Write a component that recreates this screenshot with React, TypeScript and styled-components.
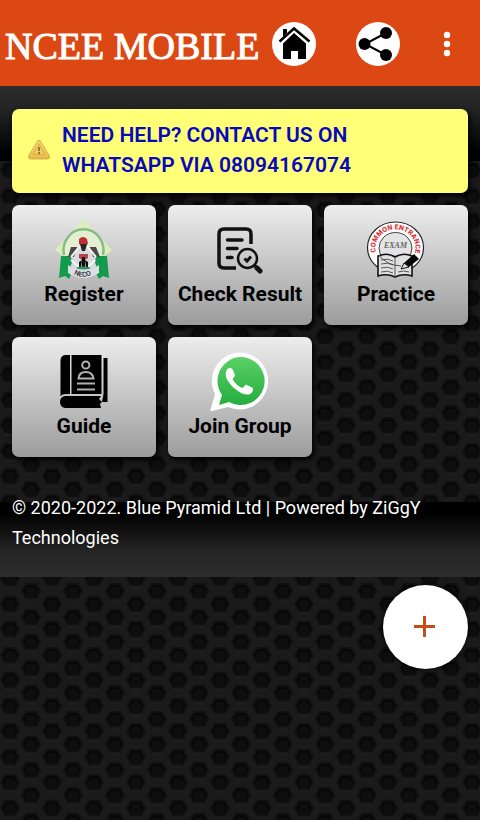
import React from "react";
import styled, { createGlobalStyle } from "styled-components";

const hexCell = (x: number, y: number) =>
  `<g transform='translate(${x} ${y})'><path d='M-9 0L-5-7H5L9 0L5 7H-5Z' fill='%23070707' stroke='%23101010' stroke-width='2' stroke-linejoin='round'/><path d='M-6 1L-3-4H3L6 1L3 6H-3Z' fill='%230e0e0e'/><path d='M-5 10H5' stroke='%231f1f1f'/></g>`;

const hexTile =
  `<svg xmlns='http://www.w3.org/2000/svg' width='42' height='51'><rect width='42' height='51' fill='%231a1a1a'/>` +
  [
    [10, 17], [10, 43], [10, -8], [52, 17], [52, 43], [52, -8],
    [31, 5], [31, 30], [31, 56],
  ].map(([x, y]) => hexCell(x, y)).join("") +
  `</svg>`;

const GlobalStyle = createGlobalStyle`
  * { box-sizing: border-box; }
  body {
    margin: 0;
    min-height: 100vh;
    background: #1a1a1a url("data:image/svg+xml,${hexTile}");
    font-family: Roboto, sans-serif;
  }
`;

const Header = styled.header`
  display: flex;
  align-items: center;
  min-height: 86px;
  padding: 0 12px 0 5px;
  background: #dc4814;
`;

const Title = styled.h1`
  flex: 1;
  margin: 0;
  padding-top: 5px;
  color: #fff;
  font: 400 38px/44px "Liberation Serif", serif;
  -webkit-text-stroke: 1px #fff;
  white-space: nowrap;
`;

const Actions = styled.nav`
  display: flex;
  align-items: center;
  gap: 40px;
  padding-top: 2px;
`;

const RoundButton = styled.button`
  width: 44px;
  height: 44px;
  padding: 0;
  border: 0;
  border-radius: 50%;
  background: #fff;
  svg { display: block; }
`;

const MenuButton = styled.button`
  width: 42px;
  height: 44px;
  padding: 0;
  margin-left: -14px;
  border: 0;
  background: none;
  svg { display: block; margin: auto; }
`;

const Page = styled.main`
  padding: 23px 12px 24px;
  background:
    linear-gradient(#2d2d2d, #242424 30%, #000 90%) top / 100% 75px no-repeat,
    linear-gradient(#000 15%, #242424 65%, #2d2d2d) bottom / 100% 75px no-repeat;
`;

const Notice = styled.a`
  display: flex;
  align-items: center;
  gap: 11px;
  padding: 11px 16px 13px 15px;
  border-radius: 7px;
  background: #ffff78;
  color: #0808bc;
  box-shadow: 2px 3px 6px #000;
  font-size: 21px;
  font-weight: 600;
  line-height: 30px;
  text-decoration: none;
  svg { flex: none; }
  span { max-width: 320px; }
`;

const Grid = styled.div`
  display: grid;
  grid-template-columns: repeat(3, 1fr);
  gap: 12px;
  margin-top: 12px;
`;

const Tile = styled.a`
  display: flex;
  flex-direction: column;
  align-items: center;
  padding: 14px 0 16px;
  border-radius: 7px;
  background: linear-gradient(#ededed, #9c9c9c);
  box-shadow: 2px 3px 6px #000;
  color: #000;
  font-size: 21px;
  font-weight: 700;
  line-height: 30px;
  text-decoration: none;
  white-space: nowrap;
`;

const Footer = styled.footer`
  margin-top: 36px;
  color: #fff;
  font-size: 18px;
  line-height: 30px;
`;

const FabRow = styled.div`
  display: flex;
  justify-content: flex-end;
  padding: 8px 12px;
`;

const Fab = styled.button`
  display: grid;
  place-items: center;
  width: 85px;
  height: 84px;
  padding: 0 2px 2px 0;
  border: 0;
  border-radius: 50%;
  background: #fff;
  box-shadow: 0 0 5px #000;
`;

const HomeIcon = () => (
  <svg width="44" height="44" viewBox="0 0 44 44" aria-hidden="true">
    <path d="M11 7h4v4l-4 4z" />
    <path d="M7.500 19.500L22 6.500L37.500 19.500" fill="none" stroke="#000" strokeWidth="2.500" />
    <path d="M22 11L34 21.500V37H26V29H19V37H11V21.500Z" />
  </svg>
);

const ShareIcon = () => (
  <svg width="44" height="44" viewBox="0 0 44 44" aria-hidden="true">
    <path d="M30 11L9 22L30 33" fill="none" stroke="#000" strokeWidth="2" />
    <circle cx="30" cy="11" r="6" />
    <circle cx="8.500" cy="22" r="6" />
    <circle cx="30" cy="33" r="6" />
  </svg>
);

const DotsIcon = () => (
  <svg width="8" height="26" viewBox="0 0 8 26" fill="#fff" aria-hidden="true">
    <circle cx="4" cy="4" r="3.200" />
    <circle cx="4" cy="13" r="3.200" />
    <circle cx="4" cy="22" r="3.200" />
  </svg>
);

const WarningIcon = () => (
  <svg width="24" height="24" viewBox="0 0 24 24" aria-hidden="true">
    <defs>
      <linearGradient id="amber" x2="0" y2="1">
        <stop stopColor="#f3d767" />
        <stop offset="1" stopColor="#eebf48" />
      </linearGradient>
    </defs>
    <path d="M9.500 4Q12 -.5 14.500 4L22.500 17Q24 21 20.500 21.500H3.500Q0 21 1.500 17Z" fill="#d9b34e" />
    <path d="M10.500 4Q12 2 13.500 4L21.500 17Q22 19.500 19.500 19.500H4.500Q2 19.500 2.500 17Z" fill="url(#amber)" />
    <path d="M12 6L18 16.500H6Z" fill="#efcf62" stroke="#d9ad48" />
    <path d="M12 9V13M12 14V16" stroke="#977732" strokeWidth="2" />
  </svg>
);

const NecoIcon = () => (
  <svg width="60" height="60" viewBox="0 0 60 60" aria-hidden="true">
    <path d="M29.500 .5L58 31L48 39H11L1 31Z" fill="#dcefb9" />
    <path d="M10 36A20 21 0 1 1 49 36" fill="#e4efd2" stroke="#86bd87" strokeWidth="2.500" />
    <path d="M7 37H17L19 51L15 60L11 57L5 59Z" fill="#129b4c" />
    <path d="M53 37H42L40 51L45 60L49 57L55 59Z" fill="#129b4c" />
    <path d="M17 28H25L23 38H14Z" fill="#4b4848" />
    <path d="M35 28H42L46 38H37Z" fill="#4b4848" />
    <path d="M23 29L29 22L36 29L43 49L29 55L16 49Z" fill="#d9dadd" />
    <path d="M17 38L26 27M42 38L33 27M17 41L26 49M41 41L33 49" stroke="#f5f5f5" strokeWidth="2" />
    <path d="M25 20Q29 16 33 20L34 25Q29 27 25 25Z" fill="#bf2f34" />
    <path d="M26 25H33L31 32H28Z" fill="#282525" />
    <path d="M25 35H34V39L31 41H28L25 39Z" fill="#b9414a" />
    <path d="M28 38H31V48H28ZM25 43L28 41L27 49H25ZM34 43L31 41L32 49H34Z" fill="#111" />
    <ellipse cx="29.500" cy="49" rx="7" ry="1.500" fill="#2f9355" />
    <path d="M14 46Q29 57 45 46V54Q29 64 14 54Z" fill="#dcdde5" />
    <path id="necoArc" d="M18 54Q29 62 43 53" fill="none" />
    <text fontFamily="Roboto, sans-serif" fontSize="7" fontWeight="700" fill="#44444c">
      <textPath href="#necoArc" startOffset="8%">NECO</textPath>
    </text>
  </svg>
);

const ResultIcon = () => (
  <svg width="60" height="60" viewBox="0 0 60 60" fill="none" stroke="#111" strokeWidth="3.500" strokeLinecap="round" aria-hidden="true">
    <path d="M41 25V15Q41 10 36 10H14Q9 10 9 15V44Q9 49 14 49H26" strokeLinecap="butt" />
    <path d="M17.500 21H32M17.500 29.500H27M17.500 38.500H22" />
    <circle cx="37.500" cy="39.500" r="9.500" strokeWidth="2.500" />
    <path d="M34.500 39.500L37 42L41 37.500" strokeLinecap="butt" strokeWidth="3" />
    <path d="M45 47L46 48" strokeWidth="3" />
    <path d="M47 49L50 52" strokeWidth="5" />
  </svg>
);

const ExamIcon = () => (
  <svg width="60" height="60" viewBox="0 0 60 60" aria-hidden="true">
    <ellipse cx="29.500" cy="28.500" rx="28" ry="25.500" fill="#fff" stroke="#25252c" strokeWidth="1.200" />
    <ellipse cx="29.500" cy="29" rx="16.500" ry="15.500" fill="#e3e3e3" stroke="#444" />
    <path id="examArc" d="M10 33A20 18.500 0 1 1 49 33" fill="none" />
    <text fontFamily="Roboto, sans-serif" fontSize="7" fontWeight="900" fill="#d9363b">
      <textPath href="#examArc">COMMON ENTRANCE</textPath>
    </text>
    <text x="29.500" y="29" textAnchor="middle" fontFamily="Liberation Serif, serif" fontSize="8" fontWeight="700" fontStyle="italic" fill="#66666c">EXAM</text>
    <path d="M12 37Q22 33 29 38Q37 33 46 37V57Q37 54 29 58Q21 54 12 57Z" fill="#e0e0e0" stroke="#111" strokeWidth="1.600" />
    <path d="M29 38V58M15 41Q22 39 27 42M15 45Q22 43 27 46M15 49Q22 47 27 50M15 53Q22 51 27 54M32 53Q38 51 43 53" fill="none" stroke="#555" />
    <path d="M13 36Q20 46 35 47" fill="none" stroke="#555" />
    <path d="M48 35L53 40L43 48L38 44Z" fill="#080808" />
    <path d="M38 44L43 48L35 50Z" fill="#ddd" stroke="#111" />
  </svg>
);

const GuideIcon = () => (
  <svg width="60" height="60" viewBox="0 0 60 60" aria-hidden="true">
    <path d="M12 4H16V43H12Q8 43 6.500 45V9Q7 4 12 4Z" />
    <path d="M17.500 4H47.500V43H17.500Z" />
    <path d="M49.500 7H53.500V51H48L49.500 43Z" />
    <path d="M11 45H47L45 48L48 51L46 53L47 57H11Q6 56 6 51Q6 46 11 45Z" />
    <g fill="none" stroke="#b0b0b0" strokeWidth="2">
      <circle cx="31.800" cy="14" r="3.600" />
      <path d="M24.500 27.500Q25 21 31.800 21T39.500 27.500ZM23 32.500H41M23 38.500H41" />
    </g>
  </svg>
);

const WhatsAppIcon = () => (
  <svg width="60" height="60" viewBox="0 0 60 60" aria-hidden="true">
    <defs>
      <linearGradient id="leaf" x2="0" y2="1">
        <stop stopColor="#5bd066" />
        <stop offset="1" stopColor="#24ad3e" />
      </linearGradient>
    </defs>
    <path d="M30.500 1.500A28.500 28.500 0 1 1 18 56L0 60.500L5 43A28.500 28.500 0 0 1 30.500 1.500Z" fill="#fff" />
    <path d="M30.500 6A24 24 0 1 1 19 51L9 54L12 44A24 24 0 0 1 30.500 6Z" fill="url(#leaf)" />
    <path d="M18 17.500Q20.500 16.500 22.500 18L25 24Q25 25.500 22.500 28Q26 34.500 32.500 37L36 33.500L43 37Q43.500 41 40 43Q35 45 28 40Q19 34 16 26Q15 20 18 17.500Z" fill="#fff" />
  </svg>
);

const PlusIcon = () => (
  <svg width="21" height="21" viewBox="0 0 21 21" aria-hidden="true">
    <path d="M10.500 0V21M0 10.500H21" stroke="#c84c18" strokeWidth="3" />
  </svg>
);

const tiles = [
  { label: "Register", Icon: NecoIcon },
  { label: "Check Result", Icon: ResultIcon },
  { label: "Practice", Icon: ExamIcon },
  { label: "Guide", Icon: GuideIcon },
  { label: "Join Group", Icon: WhatsAppIcon },
];

export default function App() {
  return (
    <>
      <GlobalStyle />
      <Header>
        <Title>NCEE MOBILE</Title>
        <Actions>
          <RoundButton aria-label="Home"><HomeIcon /></RoundButton>
          <RoundButton aria-label="Share"><ShareIcon /></RoundButton>
          <MenuButton aria-label="More options"><DotsIcon /></MenuButton>
        </Actions>
      </Header>
      <Page>
        <Notice href="#help">
          <WarningIcon />
          <span>NEED HELP? CONTACT US ON WHATSAPP VIA 08094167074</span>
        </Notice>
        <Grid>
          {tiles.map(({ label, Icon }) => (
            <Tile key={label} href={"#" + label.toLowerCase().replace(" ", "-")}>
              <Icon />
              {label}
            </Tile>
          ))}
        </Grid>
        <Footer>© 2020-2022. Blue Pyramid Ltd | Powered by ZiGgY Technologies</Footer>
      </Page>
      <FabRow>
        <Fab aria-label="Add"><PlusIcon /></Fab>
      </FabRow>
    </>
  );
}
